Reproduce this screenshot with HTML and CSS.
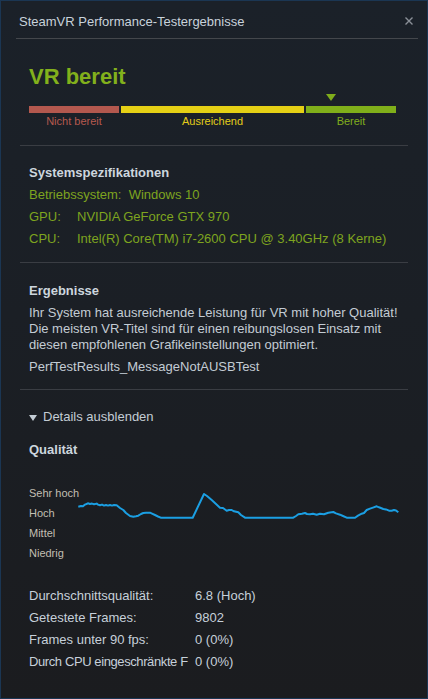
FILE: index.html
```html
<!DOCTYPE html>
<html lang="de">
<head>
<meta charset="utf-8">
<title>SteamVR Performance-Testergebnisse</title>
<link rel="stylesheet" href="styles.css">
</head>
<body>
<div class="window">
  <div class="titlebar">
    <span class="title">SteamVR Performance-Testergebnisse</span>
    <svg class="close" width="8" height="8" viewBox="0 0 8 8"><path d="M0.5 0.5 L7.5 7.5 M7.5 0.5 L0.5 7.5" stroke="#8b9098" stroke-width="1.4"/></svg>
  </div>
  <div class="rule rule-top"></div>

  <section class="section status">
    <h1 class="ready">VR bereit</h1>
    <div class="meter">
      <div class="seg seg-red">
        <div class="marker-slot"></div>
        <div class="bar"></div>
        <div class="seg-label">Nicht bereit</div>
      </div>
      <div class="seg seg-yellow">
        <div class="marker-slot"></div>
        <div class="bar"></div>
        <div class="seg-label">Ausreichend</div>
      </div>
      <div class="seg seg-green">
        <div class="marker-slot"><span class="marker"></span></div>
        <div class="bar"></div>
        <div class="seg-label">Bereit</div>
      </div>
    </div>
  </section>
  <div class="rule"></div>

  <section class="section">
    <h2 class="heading">Systemspezifikationen</h2>
    <div class="specs">
      <div class="spec-row">Betriebssystem:&nbsp; Windows 10</div>
      <div class="spec-row"><span class="spec-key">GPU:</span><span>NVIDIA GeForce GTX 970</span></div>
      <div class="spec-row"><span class="spec-key">CPU:</span><span>Intel(R) Core(TM) i7-2600 CPU @ 3.40GHz (8 Kerne)</span></div>
    </div>
  </section>
  <div class="rule"></div>

  <section class="section">
    <h2 class="heading results">Ergebnisse</h2>
    <p class="para">Ihr System hat ausreichende Leistung für VR mit hoher Qualität! Die meisten VR-Titel sind für einen reibungslosen Einsatz mit diesen empfohlenen Grafikeinstellungen optimiert.</p>
    <p class="para para-2">PerfTestResults_MessageNotAUSBTest</p>
  </section>
  <div class="rule"></div>

  <section class="section details">
    <div class="toggle"><span class="tri"></span>Details ausblenden</div>
    <h2 class="heading quality">Qualität</h2>
    <div class="chart">
      <div class="levels">
        <div>Sehr hoch</div>
        <div>Hoch</div>
        <div>Mittel</div>
        <div>Niedrig</div>
      </div>
      <svg class="graph" width="324" height="80" viewBox="0 0 324 80">
        <polyline fill="none" stroke="#1b9fe3" stroke-width="2" stroke-linejoin="round"
          points="0.3,23.7 3,23 5,23.3 7,21.6 10.3,20.3 12,21 14,20.6 16,21.3 18.7,20.6 20,21.6 22,22.3 24,21.6 26,22.6 28,22 30,22.6 32,22 34,22.6 36,22 38.7,22.3 42,25 45.3,27 48,30 52,33 55.3,33.7 58,33.2 60.3,32.7 63,31 65.3,30 68,29.7 72,29.7 74,30.6 77,32 80,33.5 82.7,34.7 114.7,34.7 126,11 129,13 133.7,17 138,21 142,24.7 145,25 148.7,27.7 151,27 153.7,27 156,28.3 160.3,29.3 163,32 167,34.7 215.3,34.7 218,33 220.3,31.3 224,30.7 227,30 229,31 232,31.3 235,30.8 238.7,31.7 242,30.7 246,31.2 250.3,29.7 255.3,29 258,30.4 262,31.7 265,33 268.7,34.7 277,34.7 280,32.6 283.7,30.7 286,30 288.7,27 292,25.6 295,24.6 298.7,23.3 301,24.3 305.3,26 308,26.4 311,27.7 313.7,27.7 316,27 318,27.4 320.3,29.3"/>
      </svg>
    </div>
    <div class="stats">
      <div class="stat"><span class="stat-key">Durchschnittsqualität:</span><span>6.8 (Hoch)</span></div>
      <div class="stat"><span class="stat-key">Getestete Frames:</span><span>9802</span></div>
      <div class="stat"><span class="stat-key">Frames unter 90 fps:</span><span>0 (0%)</span></div>
      <div class="stat"><span class="stat-key stat-key-tight">Durch CPU eingeschränkte F</span><span>0 (0%)</span></div>
    </div>
  </section>
</div>
</body>
</html>
```

FILE: styles.css
```css
* { box-sizing: border-box; }

html, body {
  margin: 0;
  padding: 0;
  background: #1b1c1f;
}

body {
  font-family: "Liberation Sans", Arial, sans-serif;
  font-size: 13px;
  line-height: 16px;
  color: #c6d0da;
}

.window {
  width: 428px;
  height: 699px;
  border: 1px solid #1b3653;
  background: linear-gradient(180deg, #1b2129 0%, #1b1f25 45%, #1b1c1f 100%);
  overflow: hidden;
}

.titlebar {
  height: 37px;
  padding: 10px 14px 0 18px;
  display: flex;
  justify-content: space-between;
  align-items: flex-start;
}

.title {
  color: #c8d2db;
  font-size: 13px;
  line-height: 16px;
  padding-top: 3px;
}

.close {
  margin-top: 6px;
}

.rule {
  height: 1px;
  background: #3a3d43;
  margin: 0 19px 0 19px;
}

.rule-top {
  margin: 0 9px 0 15px;
  background: #44474c;
}

.section {
  padding: 0 0 0 28px;
}

.status {
  padding-top: 25px;
  padding-bottom: 17px;
}

.ready {
  margin: 0;
  font-size: 22px;
  line-height: 26px;
  font-weight: bold;
  color: #82b01c;
}

.meter {
  display: flex;
  gap: 2px;
  margin-top: 4px;
  width: 367px;
}

.seg { display: flex; flex-direction: column; }
.seg-red { width: 90px; }
.seg-yellow { width: 183px; }
.seg-green { width: 90px; }

.marker-slot {
  height: 7px;
  margin-bottom: 5px;
  position: relative;
}

.marker {
  position: absolute;
  left: 20px;
  top: 0;
  width: 0;
  height: 0;
  border-left: 5.5px solid transparent;
  border-right: 5.5px solid transparent;
  border-top: 7px solid #7fad1b;
}

.bar { height: 7px; }
.seg-red .bar { background: #b3584e; }
.seg-yellow .bar { background: #e5d015; }
.seg-green .bar { background: #80af1a; }

.seg-label {
  margin-top: 2px;
  font-size: 11px;
  line-height: 13px;
  text-align: center;
}
.seg-red .seg-label { color: #b7594e; }
.seg-yellow .seg-label { color: #e3cd19; }
.seg-green .seg-label { color: #80ad1c; }

.heading {
  margin: 19px 0 0 0;
  font-size: 13px;
  line-height: 16px;
  font-weight: bold;
  color: #cdd6de;
}

.results {
  margin-top: 20px;
}

.specs {
  margin-top: 3px;
  padding-bottom: 12px;
  color: #7ea41f;
}

.spec-row {
  line-height: 22px;
  display: flex;
  white-space: nowrap;
}

.spec-key {
  width: 48px;
}

.para {
  margin: 6px 0 0 0;
  width: 372px;
  color: #c3ccd4;
}

.para-2 {
  margin-top: 6px;
  margin-bottom: 14px;
}

.toggle {
  margin-top: 19px;
  display: flex;
  align-items: center;
  color: #c3ccd4;
}

.tri {
  width: 0;
  height: 0;
  border-left: 4.5px solid transparent;
  border-right: 4.5px solid transparent;
  border-top: 6px solid #c3ccd4;
  margin-right: 6px;
  margin-top: 1px;
}

.quality {
  margin-top: 17px;
}

.chart {
  margin-top: 25px;
  display: flex;
  align-items: flex-start;
}

.levels {
  width: 49px;
  font-size: 11px;
  line-height: 20px;
  color: #c2bfb2;
  white-space: nowrap;
}

.graph {
  display: block;
}

.stats {
  margin-top: 22px;
}

.stat {
  display: flex;
  line-height: 22px;
  color: #c6d0da;
  white-space: nowrap;
}

.stat-key {
  width: 166px;
  flex: none;
  white-space: nowrap;
}

.stat-key-tight {
  letter-spacing: -0.4px;
}
```
